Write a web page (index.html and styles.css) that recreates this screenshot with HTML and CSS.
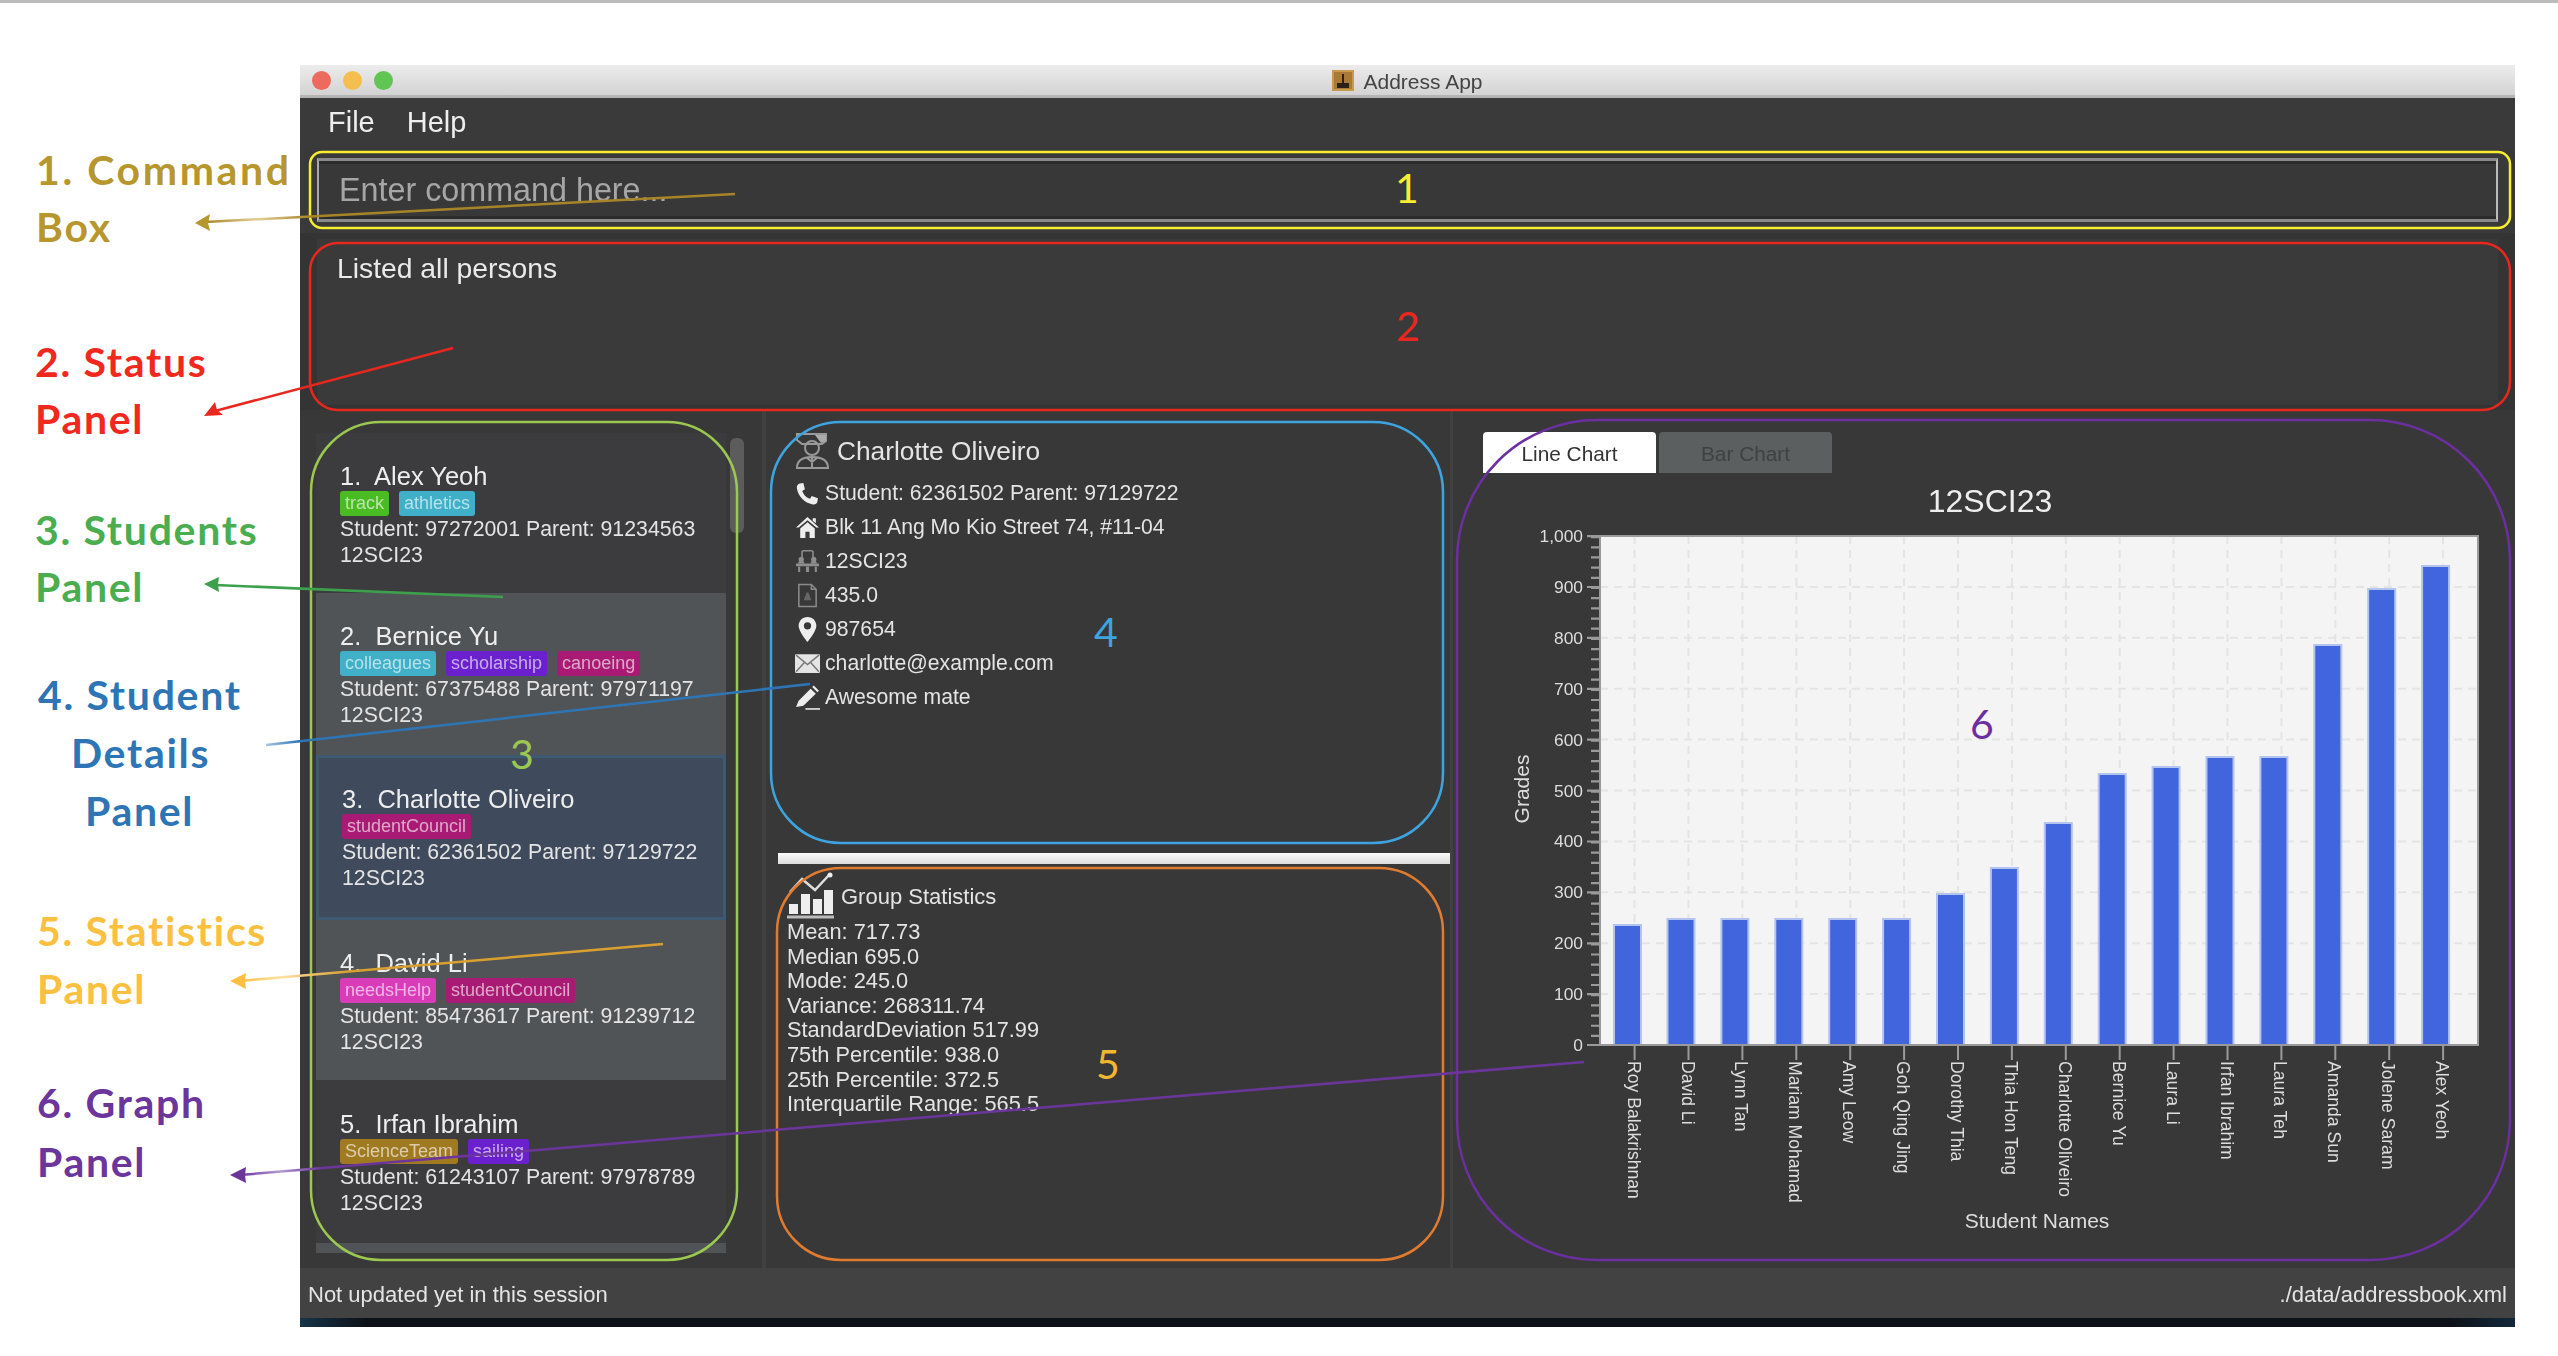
FILE: index.html
```html
<!DOCTYPE html>
<html lang="en">
<head>
  <meta charset="UTF-8" />
  <title>Address App</title>
  <link rel="stylesheet" href="styles.css">
</head>
<body>

  <div class="topline"></div>

  <div class="window">
    <div class="titlebar">
      <div class="lights">
        <span class="light red"></span>
        <span class="light yellow"></span>
        <span class="light green"></span>
      </div>
      <svg class="app-icon" viewBox="0 0 22 21">
        <rect width="22" height="21" fill="#c79a4e" />
        <rect x="2" y="2" width="18" height="17" fill="#a87a35" />
        <path d="M11 4v9M6 14h10v3H6z" stroke="#2b2114" stroke-width="2" fill="#2b2114" />
      </svg>
      <span class="app-title">Address App</span>
    </div>

    <div class="menubar">
      <span>File</span>
      <span>Help</span>
    </div>

    <div class="command-section">
      <input class="command-input" type="text" placeholder="Enter command here..." />
    </div>

    <div class="status-section">
      <div class="status-text">Listed all persons</div>
    </div>

    <div class="main">
      <div class="list-col">
        <div class="list">
          <div class="cell cell-1">
            <div class="name">1.&nbsp; Alex Yeoh</div>
            <div class="tags"><span class="tag green-tag">track</span><span class="tag teal-tag">athletics</span></div>
            <div class="line">Student: 97272001 Parent: 91234563</div>
            <div class="line">12SCI23</div>
          </div>
          <div class="cell cell-2 alt">
            <div class="name">2.&nbsp; Bernice Yu</div>
            <div class="tags"><span class="tag teal-tag">colleagues</span><span class="tag purple-tag">scholarship</span><span class="tag crimson-tag">canoeing</span></div>
            <div class="line">Student: 67375488 Parent: 97971197</div>
            <div class="line">12SCI23</div>
          </div>
          <div class="cell cell-3 selected">
            <div class="name">3.&nbsp; Charlotte Oliveiro</div>
            <div class="tags"><span class="tag crimson-tag">studentCouncil</span></div>
            <div class="line">Student: 62361502 Parent: 97129722</div>
            <div class="line">12SCI23</div>
          </div>
          <div class="cell cell-4 alt">
            <div class="name">4.&nbsp; David Li</div>
            <div class="tags"><span class="tag pink-tag">needsHelp</span><span class="tag crimson-tag">studentCouncil</span></div>
            <div class="line">Student: 85473617 Parent: 91239712</div>
            <div class="line">12SCI23</div>
          </div>
          <div class="cell cell-5">
            <div class="name">5.&nbsp; Irfan Ibrahim</div>
            <div class="tags"><span class="tag gold-tag">ScienceTeam</span><span class="tag purple-tag">sailing</span></div>
            <div class="line">Student: 61243107 Parent: 97978789</div>
            <div class="line">12SCI23</div>
          </div>
          <div class="cell-peek"></div>
        </div>
        <div class="scroll-thumb"></div>
      </div>

      <div class="middle-col">
        <div class="details">
          <div class="details-head">
            <svg class="grad-icon" viewBox="0 0 35 37">
              <path d="M2 2h29v7l-4 3H7L2 8z" fill="none" stroke="#999" stroke-width="2" />
              <path d="M20 3h11v6l-5 2z" fill="#aaa" />
              <circle cx="17" cy="16" r="7" fill="none" stroke="#999" stroke-width="2" />
              <path d="M2 36c0-8 6-11 15-11s16 3 16 11zM17 25v11M11 25l6 5 6-5" fill="none" stroke="#999" stroke-width="2" />
            </svg>
            <span class="details-name">Charlotte Oliveiro</span>
          </div>
          <div class="details-row">
            <svg class="row-icon" viewBox="0 0 24 24"><path class="icon-white" d="M4.5 2.5 8 2l1.5 6L7 9.500c1 3.500 4 6.500 7.500 7.500l1.500-2.500 6 2-.5 3.500c-.5 2-2.500 3-4.500 2.500C9 21 3 15 1.800 7c-.3-2 .7-4 2.700-4.500z" /></svg>
            <span>Student: 62361502 Parent: 97129722</span>
          </div>
          <div class="details-row">
            <svg class="row-icon" viewBox="0 0 24 24"><path class="icon-white" d="M12 2 1 12h2.500L12 5l8.500 7H23zM17 3h3v5l-3-2.500zM5 13l7-6 7 6v9h-5v-6h-4v6H5z" /></svg>
            <span>Blk 11 Ang Mo Kio Street 74, #11-04</span>
          </div>
          <div class="details-row">
            <svg class="row-icon" viewBox="0 0 24 24"><path class="icon-gray" d="M7 1h10v1.500H7zM6 2h1.500v6H6zM16.500 2H18v6h-1.500zM1 14h22v2.500H1zM3 17h2v5H3zM19 17h2v5h-2zM10.500 17h3v5h-3z" /><circle class="icon-gray" cx="6" cy="10" r="2.500" /><circle class="icon-gray" cx="18" cy="10" r="2.500" /><path class="icon-gray" d="M3 14c0-2 1-2.500 3-2.500S9 12 9 14zM15 14c0-2 1-2.500 3-2.500s3 .5 3 2.500z" /></svg>
            <span>12SCI23</span>
          </div>
          <div class="details-row">
            <svg class="row-icon" viewBox="0 0 24 26"><path d="M3 1.500h13l5 5v18H3zM16 1.500v5h5" fill="none" stroke="#8a8a8a" stroke-width="1.600" /><path d="M8 18l3-8h2l3 8z" fill="#666" /></svg>
            <span>435.0</span>
          </div>
          <div class="details-row">
            <svg class="row-icon" viewBox="0 0 24 24"><path class="icon-white" fill-rule="evenodd" d="M12 0C7 0 3.500 3.800 3.500 8.500 3.500 14 12 24 12 24s8.500-10 8.500-15.500C20.500 3.800 17 0 12 0zm0 5a3.500 3.500 0 1 1 0 7 3.500 3.500 0 0 1 0-7z" /></svg>
            <span>987654</span>
          </div>
          <div class="details-row">
            <svg class="row-icon" viewBox="0 0 24 20"><rect x="0" y="1" width="24" height="18" rx="1" fill="#e4e4e4" /><path d="M1 2l11 9 11-9M1 18l8-9M23 18l-8-9" fill="none" stroke="#777" stroke-width="1.400" /></svg>
            <span>charlotte@example.com</span>
          </div>
          <div class="details-row">
            <svg class="row-icon" viewBox="0 0 24 24"><path d="M1 21l2.500-6L15 3.500l5 5L8 20z" fill="#eee" /><path d="M16.500 2l1.500-1.500 5 5L21.500 7z" fill="#eee" /><path d="M10 23h14" stroke="#ccc" stroke-width="1.800" /></svg>
            <span>Awesome mate</span>
          </div>
        </div>

        <div class="divider"></div>

        <div class="stats">
          <div class="stats-head">
            <svg class="stats-icon" viewBox="0 0 47 48">
              <path d="M3 20 15 7l13 11L43 2" fill="none" stroke="#ddd" stroke-width="2.500" />
              <circle cx="43" cy="3" r="2.500" fill="#eee" />
              <path d="M2 32h9v10H2zM14 22h9v20h-9zM26 27h9v15h-9zM37 18h9v24h-9z" fill="#eee" />
              <path d="M0 45h47" stroke="#bbb" stroke-width="3" />
            </svg>
            <span class="stats-title">Group Statistics</span>
          </div>
          <div class="stats-line">Mean: 717.73</div>
          <div class="stats-line">Median 695.0</div>
          <div class="stats-line">Mode: 245.0</div>
          <div class="stats-line">Variance: 268311.74</div>
          <div class="stats-line">StandardDeviation 517.99</div>
          <div class="stats-line">75th Percentile: 938.0</div>
          <div class="stats-line">25th Percentile: 372.5</div>
          <div class="stats-line">Interquartile Range: 565.5</div>
        </div>
      </div>

      <div class="chart-col">
        <div class="tabs">
          <div class="tab active">Line Chart</div>
          <div class="tab">Bar Chart</div>
        </div>
        <svg class="chart" viewBox="1453 473 1062 795">
          <text class="chart-title" x="1990" y="512">12SCI23</text>

          <rect class="plot" x="1600" y="536" width="878" height="509" />
          <g class="grid">
            <path d="M1600 586.900H2478M1600 637.800H2478M1600 688.700H2478M1600 739.600H2478M1600 790.500H2478M1600 841.400H2478M1600 892.300H2478M1600 943.200H2478M1600 994.100H2478" />
            <path d="M1634.600 536V1045M1688.500 536V1045M1742.400 536V1045M1796.300 536V1045M1850.200 536V1045M1904.100 536V1045M1958 536V1045M2011.900 536V1045M2065.800 536V1045M2119.700 536V1045M2173.600 536V1045M2227.500 536V1045M2281.400 536V1045M2335.300 536V1045M2389.200 536V1045M2443.100 536V1045" />
          </g>

          <g class="bars">
            <rect x="1614" y="925" width="27" height="120" />
            <rect x="1667.500" y="919" width="27" height="126" />
            <rect x="1721.400" y="919" width="27" height="126" />
            <rect x="1775.300" y="919" width="27" height="126" />
            <rect x="1829.200" y="919" width="27" height="126" />
            <rect x="1883.100" y="919" width="27" height="126" />
            <rect x="1937" y="894" width="27" height="151" />
            <rect x="1990.900" y="868" width="27" height="177" />
            <rect x="2044.800" y="823" width="27" height="222" />
            <rect x="2098.700" y="774" width="27" height="271" />
            <rect x="2152.600" y="767" width="27" height="278" />
            <rect x="2206.500" y="757" width="27" height="288" />
            <rect x="2260.400" y="757" width="27" height="288" />
            <rect x="2314.300" y="645" width="27" height="400" />
            <rect x="2368.200" y="589" width="27" height="456" />
            <rect x="2422.100" y="566" width="27" height="479" />
          </g>

          <path class="axis-line" d="M1600 536H2478V1045H1600z" />
          <path class="tick-minor" d="M1595.500 536V1046" />
          <path class="tick-major" d="M1593.500 535V1046" />
          <path class="tick-x" d="M1634.600 1045v15M1688.500 1045v15M1742.400 1045v15M1796.300 1045v15M1850.200 1045v15M1904.100 1045v15M1958 1045v15M2011.900 1045v15M2065.800 1045v15M2119.700 1045v15M2173.600 1045v15M2227.500 1045v15M2281.400 1045v15M2335.300 1045v15M2389.200 1045v15M2443.100 1045v15" />

          <g class="y-labels">
            <text x="1583" y="542">1,000</text>
            <text x="1583" y="593">900</text>
            <text x="1583" y="644">800</text>
            <text x="1583" y="695">700</text>
            <text x="1583" y="746">600</text>
            <text x="1583" y="797">500</text>
            <text x="1583" y="847">400</text>
            <text x="1583" y="898">300</text>
            <text x="1583" y="949">200</text>
            <text x="1583" y="1000">100</text>
            <text x="1583" y="1051">0</text>
          </g>

          <g class="x-labels">
            <text transform="translate(1627.600 1061) rotate(90)">Roy Balakrishnan</text>
            <text transform="translate(1681.500 1061) rotate(90)">David Li</text>
            <text transform="translate(1735.400 1061) rotate(90)">Lynn Tan</text>
            <text transform="translate(1789.300 1061) rotate(90)">Mariam Mohamad</text>
            <text transform="translate(1843.200 1061) rotate(90)">Amy Leow</text>
            <text transform="translate(1897.100 1061) rotate(90)">Goh Qing Jing</text>
            <text transform="translate(1951 1061) rotate(90)">Dorothy Thia</text>
            <text transform="translate(2004.900 1061) rotate(90)">Thia Hon Teng</text>
            <text transform="translate(2058.800 1061) rotate(90)">Charlotte Oliveiro</text>
            <text transform="translate(2112.700 1061) rotate(90)">Bernice Yu</text>
            <text transform="translate(2166.600 1061) rotate(90)">Laura Li</text>
            <text transform="translate(2220.500 1061) rotate(90)">Irfan Ibrahim</text>
            <text transform="translate(2274.400 1061) rotate(90)">Laura Teh</text>
            <text transform="translate(2328.300 1061) rotate(90)">Amanda Sun</text>
            <text transform="translate(2382.200 1061) rotate(90)">Jolene Saram</text>
            <text transform="translate(2436.100 1061) rotate(90)">Alex Yeoh</text>
          </g>

          <text class="axis-title" transform="translate(1529 789) rotate(-90)">Grades</text>
          <text class="axis-title" x="2037" y="1228">Student Names</text>
        </svg>
      </div>
    </div>

    <div class="status-bar">
      <span>Not updated yet in this session</span>
      <span>./data/addressbook.xml</span>
    </div>
    <div class="dock-edge"></div>
  </div>

  <!-- annotations drawn on top of the screenshot -->
  <svg class="notes" viewBox="0 0 2558 1356">
    <defs>
      <linearGradient id="fadeGold"><stop offset="0" stop-color="#a88428" /><stop offset=".1" stop-color="#e3cf95" /><stop offset=".2" stop-color="#a88428" /></linearGradient>
      <linearGradient id="fadeAmber"><stop offset="0" stop-color="#ffc040" /><stop offset=".1" stop-color="#ffe0a0" /><stop offset=".25" stop-color="#d9a030" /></linearGradient>
      <linearGradient id="fadePurple"><stop offset="0" stop-color="#6b359c" /><stop offset=".03" stop-color="#b49ad0" /><stop offset=".06" stop-color="#6b359c" /></linearGradient>
      <linearGradient id="fadeBlue"><stop offset="0" stop-color="#a9c8e8" /><stop offset=".06" stop-color="#2e75b6" /></linearGradient>
    </defs>

    <rect class="box box-yellow" x="310" y="152" width="2200" height="76" rx="12" />
    <rect class="box box-red" x="310" y="243" width="2200" height="167" rx="28" />
    <rect class="box box-lime" x="311" y="422" width="426" height="838" rx="70" />
    <rect class="box box-blue" x="771" y="422" width="672" height="421" rx="70" />
    <rect class="box box-orange" x="777" y="868" width="666" height="392" rx="64" />
    <rect class="box box-purple" x="1457" y="420" width="1053" height="840" rx="140" />

    <path class="arrow" stroke="url(#fadeGold)" d="M735 194 205 222" />
    <path class="arrow-head" fill="#b8962e" d="M195 223l15-9-2 9 2 8z" />
    <path class="arrow" stroke="#e8281e" d="M453 348 215 411" />
    <path class="arrow-head" fill="#e8281e" d="M204 416l11-14 2 8 6 5z" />
    <path class="arrow" stroke="#3ca04c" d="M503 597 215 585" />
    <path class="arrow-head" fill="#3ca04c" d="M204 584l15-7-1 7 1 8z" />
    <path class="arrow" stroke="url(#fadeBlue)" d="M810 684 266 745" />
    <path class="arrow" stroke="url(#fadeAmber)" d="M663 944 240 981" />
    <path class="arrow-head" fill="#ffc040" d="M230 981l16-8-1 8 1 8z" />
    <path class="arrow" stroke="url(#fadePurple)" d="M1584 1062 240 1175" />
    <path class="arrow-head" fill="#6b359c" d="M230 1175l16-8-1 8 1 8z" />

    <g class="note-label">
      <text class="note-gold note-wide" x="36" y="185">1. Command</text>
      <text class="note-gold" x="36" y="242">Box</text>
      <text class="note-red" x="35" y="377">2. Status</text>
      <text class="note-red" x="35" y="434">Panel</text>
      <text class="note-green" x="35" y="545">3. Students</text>
      <text class="note-green" x="35" y="602">Panel</text>
      <text class="note-blue" x="38" y="710">4. Student</text>
      <text class="note-blue" x="71" y="768">Details</text>
      <text class="note-blue" x="85" y="826">Panel</text>
      <text class="note-amber" x="37" y="946">5. Statistics</text>
      <text class="note-amber" x="37" y="1004">Panel</text>
      <text class="note-purple" x="37" y="1118">6. Graph</text>
      <text class="note-purple" x="37" y="1177">Panel</text>
    </g>

    <g class="note-number">
      <text class="num-yellow" x="1407" y="203">1</text>
      <text class="num-red" x="1408" y="341">2</text>
      <text class="num-lime" x="522" y="769">3</text>
      <text class="num-blue" x="1106" y="647">4</text>
      <text class="num-amber" x="1108" y="1079">5</text>
      <text class="num-purple" x="1982" y="739">6</text>
    </g>
  </svg>

</body>
</html>
```

FILE: styles.css
```css
body {
  margin: 0;
  height: 1356px;
  overflow: hidden;
  position: relative;
  background-color: white;
  font-family: "Liberation Sans", Arial, sans-serif;
  color: #e4e4e4;
}

.topline {
  height: 3px;
  background-color: #bbb;
}

.window {
  margin: 62px 0 0 300px;
  width: 2215px;
  background-color: #383838;
  filter: blur(0.4px);
}

/* title bar */
.titlebar {
  height: 30px;
  border-bottom: 3px solid #b4b4b4;
  background: linear-gradient(#ececec, #d3d3d3);
  display: flex;
  align-items: center;
  justify-content: center;
  position: relative;
}

.lights {
  position: absolute;
  left: 12px;
  top: 6px;
  display: flex;
  gap: 12px;
}

.light {
  width: 19px;
  height: 19px;
  border-radius: 50%;
}

.light.red { background-color: #ec6a5e; }
.light.yellow { background-color: #f4bf4f; }
.light.green { background-color: #61c554; }

.app-icon {
  width: 22px;
  height: 21px;
  margin-right: 9px;
}

.app-title {
  font-size: 21px;
  line-height: 26px;
  padding-top: 3px;
  color: #444;
}

.menubar {
  height: 49px;
  padding-left: 28px;
  display: flex;
  align-items: center;
  gap: 32px;
  font-size: 29px;
  color: #eee;
  background-color: #3a3a3a;
}

/* command box */
.command-section {
  height: 86px;
  box-sizing: border-box;
  padding: 11px 17px 0;
  background-color: #393939;
}

.command-input {
  display: block;
  width: 100%;
  height: 64px;
  box-sizing: border-box;
  padding: 0 0 0 20px;
  background-color: #383838;
  border: solid #8a8a8a;
  border-width: 3px 2px;
  border-left-color: #aaa;
  border-right-color: #bbb;
  box-shadow: inset 0 3px 0 #2c2c2c, inset 0 -3px 0 #2c2c2c;
  font-family: inherit;
  font-size: 32.300px;
  color: #eee;
}

.command-input::placeholder {
  color: #a6a6a6;
  opacity: 1;
}

/* status */
.status-section {
  height: 177px;
  box-sizing: border-box;
  padding: 6px 17px 5px;
  background-color: #343434;
}

.status-text {
  height: 100%;
  box-sizing: border-box;
  padding: 12px 20px;
  background-color: #3a3a3a;
  font-size: 28.300px;
  line-height: 34px;
  color: #eaeaea;
}

/* main row */
.main {
  display: flex;
  height: 858px;
}

.list-col {
  width: 466px;
  box-sizing: border-box;
  padding: 23px 0 0 16px;
  display: flex;
  align-items: flex-start;
  border-right: 4px solid #414141;
  flex: none;
}

.list {
  width: 410px;
  flex: none;
}

.scroll-thumb {
  width: 14px;
  height: 95px;
  margin: 5px 0 0 4px;
  border-radius: 6px;
  background-color: #5c5c5c;
}

.cell {
  box-sizing: border-box;
  padding: 28px 0 0 24px;
  background-color: #3c3c3e;
}

.cell-1 { height: 160px; }
.cell-2 { height: 162px; }
.cell-3 { height: 165px; padding-top: 29px; }
.cell-4 { height: 160px; }
.cell-5 { height: 163px; padding-top: 29px; }

.cell.alt { background-color: #515457; }

.cell.selected {
  padding-left: 26px;
  background-color: #3f4a5c;
  box-shadow: inset 0 0 0 3px #3e5a72;
}

.cell-peek {
  height: 10px;
  background-color: #515457;
}

.name {
  font-size: 25.500px;
  line-height: 30px;
  color: #eee;
}

.tags {
  display: flex;
  gap: 10px;
}

.tag {
  height: 25px;
  padding: 0 5px;
  border-radius: 3px;
  font-size: 18px;
  line-height: 25px;
  color: rgba(255, 255, 255, 0.62);
}

.green-tag { background-color: #48bc22; }
.teal-tag { background-color: #3fb0c8; }
.purple-tag { background-color: #6a20cc; }
.crimson-tag { background-color: #a81a74; }
.pink-tag { background-color: #d83cb8; }
.gold-tag { background-color: #a07a20; }

.line {
  font-size: 21.300px;
  line-height: 26px;
  color: #e4e4e4;
}

/* details and statistics */
.middle-col {
  width: 684px;
  flex: none;
}

.details {
  height: 443px;
  box-sizing: border-box;
  padding: 22px 0 0 29px;
}

.details-head {
  display: flex;
  align-items: center;
  gap: 7px;
  margin-bottom: 7px;
}

.grad-icon {
  width: 35px;
  height: 37px;
}

.details-name {
  font-size: 26.300px;
  padding-top: 2px;
}

.details-row {
  height: 34px;
  display: flex;
  align-items: center;
  gap: 5px;
  font-size: 21.200px;
}

.row-icon {
  width: 25px;
  height: 25px;
  flex: none;
}

.icon-white { fill: #eee; }
.icon-gray { fill: #8e8e8e; }

.divider {
  height: 11px;
  margin-left: 12px;
  background: linear-gradient(#fafafa, #dcdcdc);
}

.stats {
  padding: 8px 0 0 21px;
}

.stats-head {
  display: flex;
  align-items: center;
  gap: 7px;
}

.stats-icon {
  width: 47px;
  height: 48px;
}

.stats-title {
  font-size: 22px;
  padding-top: 2px;
}

.stats-line {
  font-size: 21.800px;
  line-height: 24.600px;
}

/* chart */
.chart-col {
  flex: 1;
  border-left: 3px solid #414141;
  box-sizing: border-box;
}

.tabs {
  height: 41px;
  margin-top: 22px;
  padding-left: 30px;
  display: flex;
  gap: 3px;
}

.tab {
  width: 173px;
  border-radius: 4px 4px 0 0;
  background-color: #5c5f5f;
  color: #3f4242;
  font-size: 20.800px;
  line-height: 44px;
  text-align: center;
}

.tab.active {
  background-color: white;
  color: #333;
}

.chart {
  display: block;
  width: 1062px;
  height: 795px;
}

.chart text {
  font-family: "Liberation Sans", Arial, sans-serif;
  fill: #ddd;
}

.chart .chart-title {
  font-size: 32px;
  text-anchor: middle;
  fill: #eee;
}

.plot { fill: #f4f4f4; }

.grid path {
  fill: none;
  stroke: #e4e4e4;
  stroke-width: 2;
  stroke-dasharray: 8 6;
}

.bars rect {
  fill: #4065dc;
  stroke: #b4c4f0;
  stroke-width: 2;
}

.axis-line {
  fill: none;
  stroke: #9a9a9a;
  stroke-width: 2;
}

.tick-minor {
  stroke: #9a9a9a;
  stroke-width: 9;
  stroke-dasharray: 2.200 7.980;
}

.tick-major {
  stroke: #9a9a9a;
  stroke-width: 13;
  stroke-dasharray: 2.200 48.700;
}

.tick-x {
  stroke: #9a9a9a;
  stroke-width: 2;
}

.y-labels text {
  font-size: 17.400px;
  text-anchor: end;
}

.x-labels text {
  font-size: 17.600px;
}

.chart .axis-title {
  font-size: 21px;
  text-anchor: middle;
}

/* bottom */
.status-bar {
  height: 50px;
  box-sizing: border-box;
  padding: 3px 8px 0;
  display: flex;
  align-items: center;
  justify-content: space-between;
  background-color: #424242;
  font-size: 22px;
}

.dock-edge {
  height: 9px;
  background: linear-gradient(90deg, #16344a, #0d1117 3%, #0d1117 97%, #12283a);
}

/* annotations */
.notes {
  position: absolute;
  left: 0;
  top: 0;
  width: 2558px;
  height: 1356px;
  pointer-events: none;
}

.box {
  fill: none;
  stroke-width: 2.500;
}

.box-yellow { stroke: #f8ee30; }
.box-red { stroke: #e8281e; }
.box-lime { stroke: #9bc850; }
.box-blue { stroke: #3ea4e0; }
.box-orange { stroke: #e07b30; }
.box-purple { stroke: #6b2fa0; }

.arrow {
  fill: none;
  stroke-width: 2.500;
}

.note-label text {
  font-family: Lato, "Open Sans", sans-serif;
  font-size: 41px;
  font-weight: 700;
  letter-spacing: 1.700px;
}

.note-label .note-wide { letter-spacing: 2.600px; }

.note-gold { fill: #b8962e; }
.note-red { fill: #f0281e; }
.note-green { fill: #4aae50; }
.note-blue { fill: #2e75b6; }
.note-amber { fill: #fcc040; }
.note-purple { fill: #6b359c; }

.note-number text {
  font-family: Lato, "Open Sans", sans-serif;
  font-size: 41px;
  text-anchor: middle;
}

.num-yellow { fill: #f8ee30; }
.num-red { fill: #e8281e; }
.num-lime { fill: #9bc850; }
.num-blue { fill: #3ea4e0; }
.num-amber { fill: #f0b830; }
.num-purple { fill: #6b2fa0; }
```
